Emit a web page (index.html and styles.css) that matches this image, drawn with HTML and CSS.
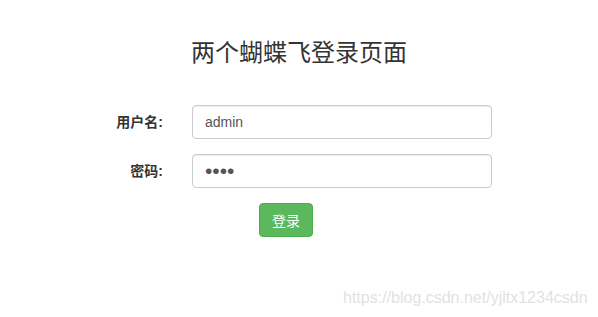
FILE: index.html
```html
<!DOCTYPE html>
<html lang="zh-CN">
<head>
<meta charset="utf-8">
<title>两个蝴蝶飞登录页面</title>
<link rel="stylesheet" href="styles.css">
</head>
<body>
<div class="page">
  <h1 class="title">两个蝴蝶飞登录页面</h1>
  <form class="login-form">
    <div class="form-row">
      <label class="form-label" for="username">用户名:</label>
      <input class="form-input" id="username" type="text" value="admin">
    </div>
    <div class="form-row">
      <label class="form-label" for="password">密码:</label>
      <input class="form-input form-input-password" id="password" type="password" value="1234">
    </div>
    <div class="form-actions">
      <button class="btn-success" type="button">登录</button>
    </div>
  </form>
  <div class="watermark">https://blog.csdn.net/yjltx1234csdn</div>
</div>
</body>
</html>
```
FILE: styles.css
```css
html, body {
  margin: 0;
  padding: 0;
  background: #fff;
}
body {
  font-family: "Liberation Sans", Arial, "Noto Sans CJK SC", sans-serif;
  font-size: 14px;
  line-height: 20px;
  color: #333;
}
.page {
  position: relative;
  width: 598px;
  height: 317px;
  overflow: hidden;
}
.title {
  margin: 0;
  padding-top: 38px;
  font-size: 24px;
  line-height: 26px;
  font-weight: 400;
  text-align: center;
  color: #333;
  font-family: "Noto Sans CJK SC", sans-serif;
}
.login-form {
  margin-top: 41px;
  display: flex;
  flex-direction: column;
  gap: 15px;
}
.form-row {
  display: flex;
  align-items: center;
  gap: 29px;
}
.form-label {
  width: 163px;
  text-align: right;
  font-weight: 700;
  color: #333;
}
.form-input {
  box-sizing: border-box;
  width: 300px;
  height: 34px;
  margin: 0;
  padding: 6px 12px;
  border: 1px solid #ccc;
  border-radius: 4px;
  box-shadow: inset 0 1px 1px rgba(0,0,0,.075);
  font-family: "Liberation Sans", Arial, sans-serif;
  font-size: 14px;
  line-height: 20px;
  color: #555;
  background: #fff;
  outline: none;
}
.form-input-password {
  font-size: 21px;
  line-height: 20px;
  padding-top: 5px;
  padding-bottom: 5px;
}
.form-actions {
  display: flex;
  padding-left: 259px;
}
.btn-success {
  box-sizing: border-box;
  height: 34px;
  padding: 6px 12px;
  border: 1px solid #4cae4c;
  border-radius: 4px;
  background: #5cb85c;
  color: #fff;
  font-family: "Noto Sans CJK SC", sans-serif;
  font-size: 14px;
  line-height: 20px;
}
.watermark {
  position: absolute;
  left: 343px;
  top: 288px;
  font-size: 16px;
  line-height: 20px;
  color: #e2e2e2;
  white-space: nowrap;
}
```
